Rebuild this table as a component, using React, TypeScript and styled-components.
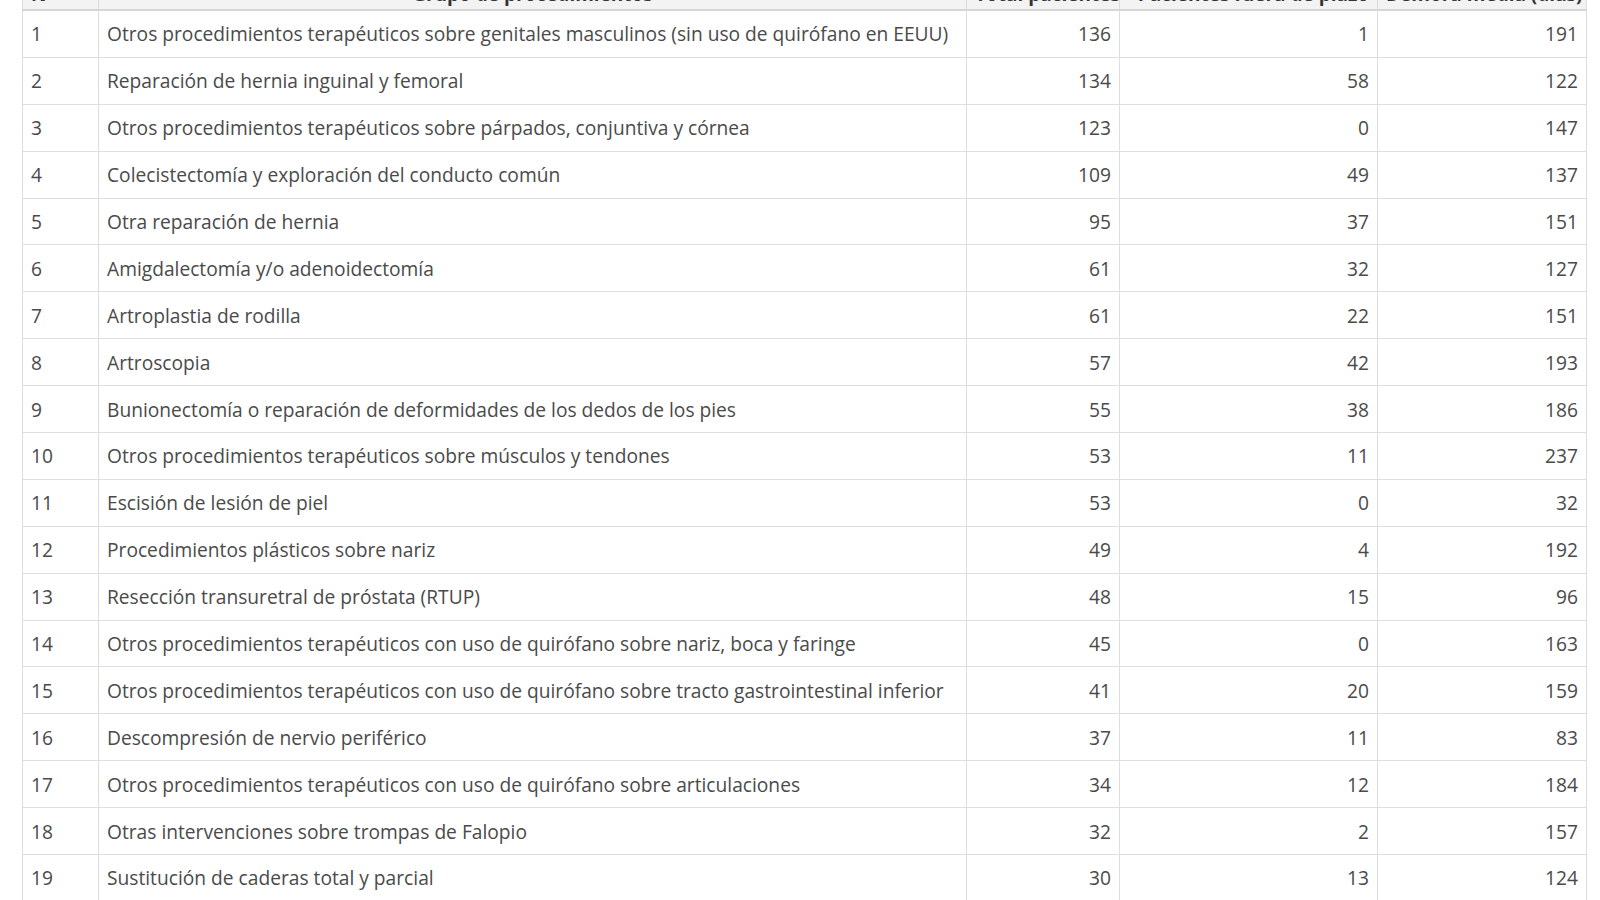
import styled, { createGlobalStyle } from "styled-components";

const GlobalStyle = createGlobalStyle`
  html, body {
    margin: 0;
    padding: 0;
    background: #fff;
    overflow: hidden;
  }
  body {
    font-family: "Open Sans", "DejaVu Sans", sans-serif;
    color: #4a4a4a;
  }
`;

const Page = styled.div`
  width: 1600px;
  height: 900px;
  overflow: hidden;
  padding: 0 14px 0 22px;
  box-sizing: border-box;
`;

const Table = styled.table`
  width: 1564px;
  border-collapse: collapse;
  table-layout: fixed;
  margin-top: -38px;
  font-size: 19.2px;
`;

const HeadCell = styled.th<{ $align?: string }>`
  height: 41px;
  padding: 0 8px 5px;
  background: #f3f3f3;
  border: 1px solid #dcdcdc;
  border-bottom: 2px solid #d6d6d6;
  font-weight: 700;
  font-size: 19px;
  line-height: 1;
  color: #333;
  text-align: ${(p) => p.$align || "left"};
  vertical-align: bottom;
  white-space: nowrap;
  overflow: hidden;
`;

const Row = styled.tr``;

const Cell = styled.td<{ $num?: boolean }>`
  height: 45.9px;
  padding: 0 8px;
  border: 1px solid #dedede;
  text-align: ${(p) => (p.$num ? "right" : "left")};
  vertical-align: middle;
  white-space: nowrap;
  overflow: hidden;
`;

type Item = [string, number, number, number];

const rows: Item[] = [
  ["Otros procedimientos terapéuticos sobre genitales masculinos (sin uso de quirófano en EEUU)", 136, 1, 191],
  ["Reparación de hernia inguinal y femoral", 134, 58, 122],
  ["Otros procedimientos terapéuticos sobre párpados, conjuntiva y córnea", 123, 0, 147],
  ["Colecistectomía y exploración del conducto común", 109, 49, 137],
  ["Otra reparación de hernia", 95, 37, 151],
  ["Amigdalectomía y/o adenoidectomía", 61, 32, 127],
  ["Artroplastia de rodilla", 61, 22, 151],
  ["Artroscopia", 57, 42, 193],
  ["Bunionectomía o reparación de deformidades de los dedos de los pies", 55, 38, 186],
  ["Otros procedimientos terapéuticos sobre músculos y tendones", 53, 11, 237],
  ["Escisión de lesión de piel", 53, 0, 32],
  ["Procedimientos plásticos sobre nariz", 49, 4, 192],
  ["Resección transuretral de próstata (RTUP)", 48, 15, 96],
  ["Otros procedimientos terapéuticos con uso de quirófano sobre nariz, boca y faringe", 45, 0, 163],
  ["Otros procedimientos terapéuticos con uso de quirófano sobre tracto gastrointestinal inferior", 41, 20, 159],
  ["Descompresión de nervio periférico", 37, 11, 83],
  ["Otros procedimientos terapéuticos con uso de quirófano sobre articulaciones", 34, 12, 184],
  ["Otras intervenciones sobre trompas de Falopio", 32, 2, 157],
  ["Sustitución de caderas total y parcial", 30, 13, 124],
];

export default function App() {
  return (
    <Page>
      <GlobalStyle />
      <Table>
        <colgroup>
          <col style={{ width: 76 }} />
          <col style={{ width: 868 }} />
          <col style={{ width: 153 }} />
          <col style={{ width: 258 }} />
          <col style={{ width: 209 }} />
        </colgroup>
        <thead>
          <tr>
            <HeadCell>Nº</HeadCell>
            <HeadCell $align="center">Grupo de procedimientos</HeadCell>
            <HeadCell $align="right">Total pacientes</HeadCell>
            <HeadCell $align="right">Pacientes fuera de plazo</HeadCell>
            <HeadCell $align="right">Demora media (días)</HeadCell>
          </tr>
        </thead>
        <tbody>
          {rows.map(([name, total, late, days], i) => (
            <Row key={i}>
              <Cell>{i + 1}</Cell>
              <Cell>{name}</Cell>
              <Cell $num>{total}</Cell>
              <Cell $num>{late}</Cell>
              <Cell $num>{days}</Cell>
            </Row>
          ))}
        </tbody>
      </Table>
    </Page>
  );
}
